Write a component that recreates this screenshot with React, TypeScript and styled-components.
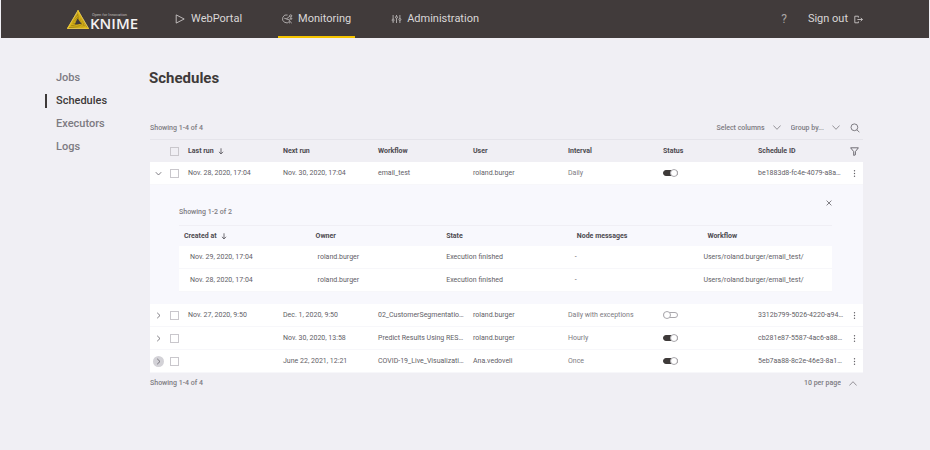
import React, { Fragment, useState } from 'react';
import styled, { createGlobalStyle, css } from 'styled-components';

const color = {
  bar: '#413b3b',
  barText: '#dad7d7',
  page: '#f0eff4',
  panel: '#f8f8fd',
  ink: '#3e3a39',
  text: '#626066',
  muted: '#7d7b82',
  line: '#e5e4ea',
  faintLine: '#f0eff5',
  accent: '#f5c400',
};

const GlobalStyle = createGlobalStyle`
  *, *::before, *::after { box-sizing: border-box; }
  body {
    margin: 0;
    background: ${color.page};
    color: ${color.text};
    font: 7px/12px Roboto, sans-serif;
  }
  button, select, input { font: inherit; color: inherit; margin: 0; }
`;

/* ---------- icons ---------- */

const Icon = styled.svg.attrs({ fill: 'none', stroke: 'currentColor', 'aria-hidden': true })<{ $w: number; $h: number }>`
  display: block;
  flex: none;
  width: ${(p) => p.$w}px;
  height: ${(p) => p.$h}px;
`;

const PlayIcon = () => (
  <Icon $w={11} $h={10} viewBox="0 0 11 10" strokeWidth={0.8} strokeLinejoin="round">
    <path d="M1.2.9 9.2 5 1.2 9.1Z" />
  </Icon>
);
const MonitorIcon = () => (
  <Icon $w={11} $h={10} viewBox="0 0 11 10" strokeWidth={0.7}>
    <path d="M5.6 1A4 4 0 1 0 7.6 7.4" />
    <path d="M4.4 4.9 7.6 2.4M4.4 4.9 8 6.2M2.2 4.2l2.2.7" />
    <circle cx="8.7" cy="1.9" r="1.1" />
    <circle cx="9" cy="4.6" r=".8" />
    <path d="m7.2 6.6 2.6 2.6M7 9.3l1.2-1.1" />
  </Icon>
);
const SlidersIcon = () => (
  <Icon $w={11} $h={10} viewBox="0 0 11 10" strokeWidth={0.7}>
    <path d="M2.1 1v4M2.1 7.2V9M5.5 1v1.2M5.5 4.4V9M8.9 1v3.4M8.9 6.6V9" />
    <circle cx="2.1" cy="6.1" r="1" />
    <circle cx="5.5" cy="3.3" r="1" />
    <circle cx="8.9" cy="5.5" r="1" />
  </Icon>
);
const SignOutIcon = () => (
  <Icon $w={9} $h={9} viewBox="0 0 9 9" strokeWidth={0.8}>
    <path d="M4.4 2.6V1.2H.8v6.6h3.6V6.4M3.4 4.5h5M6.7 2.8l1.7 1.7-1.7 1.7" />
  </Icon>
);
const ChevronIcon = ({ dir }: { dir: 'down' | 'up' }) => (
  <Icon $w={8} $h={5} viewBox="0 0 8 5" strokeWidth={0.8}>
    <path d={dir === 'down' ? 'M.4.5 4 4.3 7.6.5' : 'M.4 4.5 4 .7l3.6 3.8'} />
  </Icon>
);
const ExpandIcon = ({ open }: { open: boolean }) => (
  <Icon $w={7} $h={7} viewBox="0 0 7 7" strokeWidth={0.8}>
    <path d={open ? 'M.8 2.2 3.5 5l2.7-2.8' : 'M2.2.8 5 3.5 2.2 6.2'} />
  </Icon>
);
const SortIcon = () => (
  <Icon $w={6} $h={7} viewBox="0 0 6 7" strokeWidth={0.8}>
    <path d="M3 .3v5.6M.9 3.8 3 5.9l2.1-2.1" />
  </Icon>
);
const SearchIcon = () => (
  <Icon $w={10} $h={10} viewBox="0 0 10 10" strokeWidth={0.8}>
    <circle cx="4.4" cy="4.3" r="3.4" />
    <path d="m6.9 6.8 2.5 2.5" />
  </Icon>
);
const FilterIcon = () => (
  <Icon $w={9} $h={9} viewBox="0 0 9 9" strokeWidth={0.9} strokeLinejoin="round">
    <path d="M.6.8h7.8L5.4 4.6v3.2L3.7 8.4V4.6Z" />
  </Icon>
);
const CloseIcon = () => (
  <Icon $w={6} $h={6} viewBox="0 0 6 6" strokeWidth={0.8}>
    <path d="m.6.6 4.8 4.8M5.4.6.6 5.4" />
  </Icon>
);
const MoreIcon = () => (
  <Icon $w={9} $h={9} viewBox="0 0 9 9" strokeWidth={0}>
    <g fill="currentColor">
      <circle cx="4.5" cy="1.7" r=".7" />
      <circle cx="4.5" cy="4.5" r=".7" />
      <circle cx="4.5" cy="7.3" r=".7" />
    </g>
  </Icon>
);
const LogoMark = () => (
  <Icon $w={22} $h={19} viewBox="0 0 22 19" strokeWidth={0.6}>
    <path d="M11 .5 21.5 18.5H.5Z" fill="#a98a14" />
    <g stroke="#f0c81c" strokeWidth={0.6}>
      <path d="M11 .5 21.5 18.5H.5ZM11 .5 18.8 17M11 .5 16 15.2M11 .5 13.4 13" />
      <path d="M21.5 18.5 2.4 16.3M21.5 18.5 4.6 14.2M21.5 18.5 7 12" />
      <path d="M.5 18.5 10.6 3M.5 18.5 10.8 5.8M.5 18.5 11 8.6" />
    </g>
    <path d="m10.4 8.6 4.2 5.2-6.8.8Z" fill={color.bar} stroke="none" />
  </Icon>
);

/* ---------- top bar ---------- */

const TopBar = styled.header`
  display: flex;
  align-items: stretch;
  height: 38px;
  margin: 0 1px;
  padding: 0 66px;
  background: ${color.bar};
  color: ${color.barText};
  font-size: 11px;
  line-height: 16px;
`;
const Logo = styled.a`
  display: flex;
  align-items: flex-end;
  gap: 1px;
  padding-bottom: 9px;
  color: #f3f1f1;
  text-decoration: none;
`;
const LogoText = styled.span`
  display: flex;
  flex-direction: column;
`;
const LogoTagline = styled.span`
  padding-left: 2px;
  font-size: 4px;
  line-height: 5px;
  color: #bdb9b9;
`;
const LogoName = styled.span`
  font: 600 15px/12px 'Open Sans', sans-serif;
`;
const MainNav = styled.nav`
  display: flex;
  gap: 32px;
  margin-left: 33px;
`;
const NavLink = styled.a<{ $active?: boolean }>`
  display: flex;
  align-items: center;
  gap: 5px;
  padding: 0 4px;
  color: inherit;
  text-decoration: none;
  ${(p) => p.$active && css`box-shadow: inset 0 -2px ${color.accent};`}
`;
const UserNav = styled.div`
  display: flex;
  align-items: center;
  gap: 17px;
  margin-left: auto;
`;
const HelpLink = styled.a`
  padding: 0 4px;
  color: #a9a5a5;
  font-size: 12px;
  text-decoration: none;
`;
const SignOutButton = styled.button`
  display: flex;
  align-items: center;
  gap: 6px;
  padding: 0;
  border: 0;
  background: none;
`;

/* ---------- page ---------- */

const Body = styled.div`
  display: grid;
  grid-template-columns: 105px minmax(0, 1fr);
  padding: 27px 67px 40px 45px;
`;
const SideNav = styled.nav`
  display: flex;
  flex-direction: column;
  align-items: flex-start;
  gap: 9px;
  padding-top: 6px;
`;
const SideLink = styled.a<{ $active?: boolean }>`
  padding-left: 9px;
  border-left: 2px solid ${(p) => (p.$active ? color.ink : 'transparent')};
  color: ${(p) => (p.$active ? color.ink : color.muted)};
  font-size: 11px;
  font-weight: 500;
  line-height: 14px;
  text-decoration: none;
`;
const Main = styled.main`
  min-width: 0;
`;
const Title = styled.h1`
  margin: 0 0 25px -1px;
  color: ${color.ink};
  font-size: 15px;
  font-weight: 700;
  line-height: 26px;
`;
const ControlBar = styled.div<{ $top?: boolean }>`
  display: flex;
  align-items: center;
  height: ${(p) => (p.$top ? 23 : 20)}px;
  padding-right: ${(p) => (p.$top ? 3 : 6)}px;
`;
const Caption = styled.span`
  margin-right: auto;
  font-weight: 500;
  color: ${color.muted};
`;
const SelectBox = styled.label`
  display: flex;
  align-items: center;
  margin-right: 10px;
  color: ${color.muted};
  font-weight: 500;
  &:last-child { margin-right: 0; }
`;
const Select = styled.select`
  appearance: none;
  field-sizing: content;
  padding: 0 16px 0 0;
  margin-right: -8px;
  border: 0;
  background: none;
  & + svg { pointer-events: none; }
`;
const IconButton = styled.button<{ $round?: boolean }>`
  display: flex;
  align-items: center;
  justify-content: center;
  padding: 0;
  border: 0;
  border-radius: 50%;
  background: none;
  color: ${color.text};
  ${(p) => p.$round && css`width: 11px; height: 11px;`}
  &:focus-visible, &[data-hover='true'] { background: #d3d2d7; outline: 0; }
`;

/* ---------- table ---------- */

const Table = styled.table`
  width: 100%;
  table-layout: fixed;
  border-collapse: separate;
  border-spacing: 0;
`;
const Col = styled.col<{ $w?: number }>`
  width: ${(p) => (p.$w ? `${p.$w}px` : 'auto')};
`;
const HeadCell = styled.th<{ $inset?: number; $nested?: boolean }>`
  height: ${(p) => (p.$nested ? 21 : 23)}px;
  padding: 0 0 0 ${(p) => p.$inset ?? 3}px;
  border-top: 1px solid ${(p) => (p.$nested ? color.faintLine : color.line)};
  color: #4d4a50;
  font-weight: 700;
  text-align: left;
  white-space: nowrap;
`;
const SortLabel = styled.span`
  display: flex;
  align-items: center;
  gap: 4px;
`;
const Cell = styled.td<{ $inset?: number; $soft?: boolean }>`
  height: 23px;
  padding: 0 0 0 ${(p) => p.$inset ?? 3}px;
  border-bottom: 1px solid #f7f7fa;
  background: #fff;
  white-space: nowrap;
  color: ${(p) => (p.$soft ? color.muted : color.text)};
`;
const DetailCell = styled.td`
  padding: 10px 31px 12px 29px;
  background: ${color.panel};
`;
const DetailHead = styled.div`
  display: flex;
  align-items: flex-start;
  height: 30px;
  ${Caption} { margin-top: 11px; }
  ${IconButton} { margin-top: 5px; }
`;
const CheckBox = styled.input.attrs({ type: 'checkbox' })`
  appearance: none;
  display: block;
  width: 9px;
  height: 9px;
  border: 1px solid #c9c7cc;
  &:checked { background: ${color.ink}; }
`;
const Switch = styled.input.attrs({ type: 'checkbox', role: 'switch' })`
  appearance: none;
  display: flex;
  align-items: center;
  width: 15px;
  height: 6px;
  border: 1px solid #aaa8ad;
  border-radius: 3px;
  background: #fff;
  &::before {
    content: '';
    flex: none;
    width: 8px;
    height: 8px;
    margin-left: -1px;
    border: 1px solid #aaa8ad;
    border-radius: 50%;
    background: #fff;
  }
  &:checked { background: ${color.ink}; border-color: ${color.ink}; }
  &:checked::before { margin-left: 6px; }
`;

/* ---------- data ---------- */

const columns = ['Last run', 'Next run', 'Workflow', 'User', 'Interval', 'Status', 'Schedule ID'];

const schedules = [
  { id: 'be1883d8-fc4e-4079-a8a…', last: 'Nov. 28, 2020, 17:04', next: 'Nov. 30, 2020, 17:04', workflow: 'email_test', user: 'roland.burger', interval: 'Daily', on: true },
  { id: '3312b799-5026-4220-a94…', last: 'Nov. 27, 2020, 9:50', next: 'Dec. 1, 2020, 9:50', workflow: '02_CustomerSegmentatio…', user: 'roland.burger', interval: 'Daily with exceptions', on: false },
  { id: 'cb281e87-5587-4ac6-a88…', last: '', next: 'Nov. 30, 2020, 13:58', workflow: 'Predict Results Using RES…', user: 'roland.burger', interval: 'Hourly', on: true },
  { id: '5eb7aa88-8c2e-46e3-8a1…', last: '', next: 'June 22, 2021, 12:21', workflow: 'COVID-19_Live_Visualizati…', user: 'Ana.vedoveli', interval: 'Once', on: true },
];

const jobColumns = ['Created at', 'Owner', 'State', 'Node messages', 'Workflow'];
const jobInsets = [11, 8, 6, 4, 2];
const jobs = [
  ['Nov. 29, 2020, 17:04', 'roland.burger', 'Execution finished', '-', 'Users/roland.burger/email_test/'],
  ['Nov. 28, 2020, 17:04', 'roland.burger', 'Execution finished', '-', 'Users/roland.burger/email_test/'],
];

function JobDetails({ onClose }: { onClose: () => void }) {
  return (
    <>
      <DetailHead>
        <Caption>Showing 1-2 of 2</Caption>
        <IconButton aria-label="Close details" onClick={onClose}><CloseIcon /></IconButton>
      </DetailHead>
      <Table>
        <thead>
          <tr>
            {jobColumns.map((name, i) => (
              <HeadCell key={name} $nested $inset={i === 0 ? 5 : 6}>
                <SortLabel>{name}{i === 0 && <SortIcon />}</SortLabel>
              </HeadCell>
            ))}
          </tr>
        </thead>
        <tbody>
          {jobs.map((job) => (
            <tr key={job[0]}>
              {job.map((value, i) => <Cell key={i} $inset={jobInsets[i]}>{value}</Cell>)}
            </tr>
          ))}
        </tbody>
      </Table>
    </>
  );
}

function ScheduleTable() {
  const [openId, setOpenId] = useState<string | null>(schedules[0].id);
  return (
    <Table>
      <colgroup>
        <Col $w={17} />
        <Col $w={18} />
        {columns.map((name) => <Col key={name} />)}
        <Col $w={13} />
      </colgroup>
      <thead>
        <tr>
          <HeadCell aria-label="Expand" />
          <HeadCell><CheckBox aria-label="Select all" /></HeadCell>
          {columns.map((name, i) => (
            <HeadCell key={name}><SortLabel>{name}{i === 0 && <SortIcon />}</SortLabel></HeadCell>
          ))}
          <HeadCell $inset={0}><IconButton aria-label="Filter"><FilterIcon /></IconButton></HeadCell>
        </tr>
      </thead>
      <tbody>
        {schedules.map((s, i) => {
          const open = s.id === openId;
          return (
            <Fragment key={s.id}>
              <tr>
                <Cell>
                  <IconButton
                    $round
                    data-hover={i === schedules.length - 1}
                    aria-label="Toggle details"
                    aria-expanded={open}
                    onClick={() => setOpenId(open ? null : s.id)}
                  >
                    <ExpandIcon open={open} />
                  </IconButton>
                </Cell>
                <Cell><CheckBox aria-label={`Select ${s.workflow}`} /></Cell>
                <Cell>{s.last}</Cell>
                <Cell>{s.next}</Cell>
                <Cell>{s.workflow}</Cell>
                <Cell>{s.user}</Cell>
                <Cell $soft>{s.interval}</Cell>
                <Cell><Switch defaultChecked={s.on} aria-label={`Status of ${s.workflow}`} /></Cell>
                <Cell>{s.id}</Cell>
                <Cell $inset={0}><IconButton aria-label="More actions"><MoreIcon /></IconButton></Cell>
              </tr>
              {open && (
                <tr>
                  <DetailCell colSpan={columns.length + 3}>
                    <JobDetails onClose={() => setOpenId(null)} />
                  </DetailCell>
                </tr>
              )}
            </Fragment>
          );
        })}
      </tbody>
    </Table>
  );
}

export default function App() {
  return (
    <>
      <GlobalStyle />
      <TopBar>
        <Logo href="#home">
          <LogoMark />
          <LogoText>
            <LogoTagline>Open for Innovation</LogoTagline>
            <LogoName>KNIME</LogoName>
          </LogoText>
        </Logo>
        <MainNav aria-label="Main">
          <NavLink href="#webportal"><PlayIcon />WebPortal</NavLink>
          <NavLink href="#monitoring" $active><MonitorIcon />Monitoring</NavLink>
          <NavLink href="#administration"><SlidersIcon />Administration</NavLink>
        </MainNav>
        <UserNav>
          <HelpLink href="#help">?</HelpLink>
          <SignOutButton>Sign out<SignOutIcon /></SignOutButton>
        </UserNav>
      </TopBar>
      <Body>
        <SideNav aria-label="Monitoring">
          <SideLink href="#jobs">Jobs</SideLink>
          <SideLink href="#schedules" $active>Schedules</SideLink>
          <SideLink href="#executors">Executors</SideLink>
          <SideLink href="#logs">Logs</SideLink>
        </SideNav>
        <Main>
          <Title>Schedules</Title>
          <ControlBar $top>
            <Caption>Showing 1-4 of 4</Caption>
            <SelectBox>
              <Select aria-label="Select columns"><option>Select columns</option></Select>
              <ChevronIcon dir="down" />
            </SelectBox>
            <SelectBox>
              <Select aria-label="Group by"><option>Group by...</option></Select>
              <ChevronIcon dir="down" />
            </SelectBox>
            <IconButton aria-label="Search"><SearchIcon /></IconButton>
          </ControlBar>
          <ScheduleTable />
          <ControlBar>
            <Caption>Showing 1-4 of 4</Caption>
            <SelectBox>
              <Select aria-label="Rows per page"><option>10 per page</option></Select>
              <ChevronIcon dir="up" />
            </SelectBox>
          </ControlBar>
        </Main>
      </Body>
    </>
  );
}
